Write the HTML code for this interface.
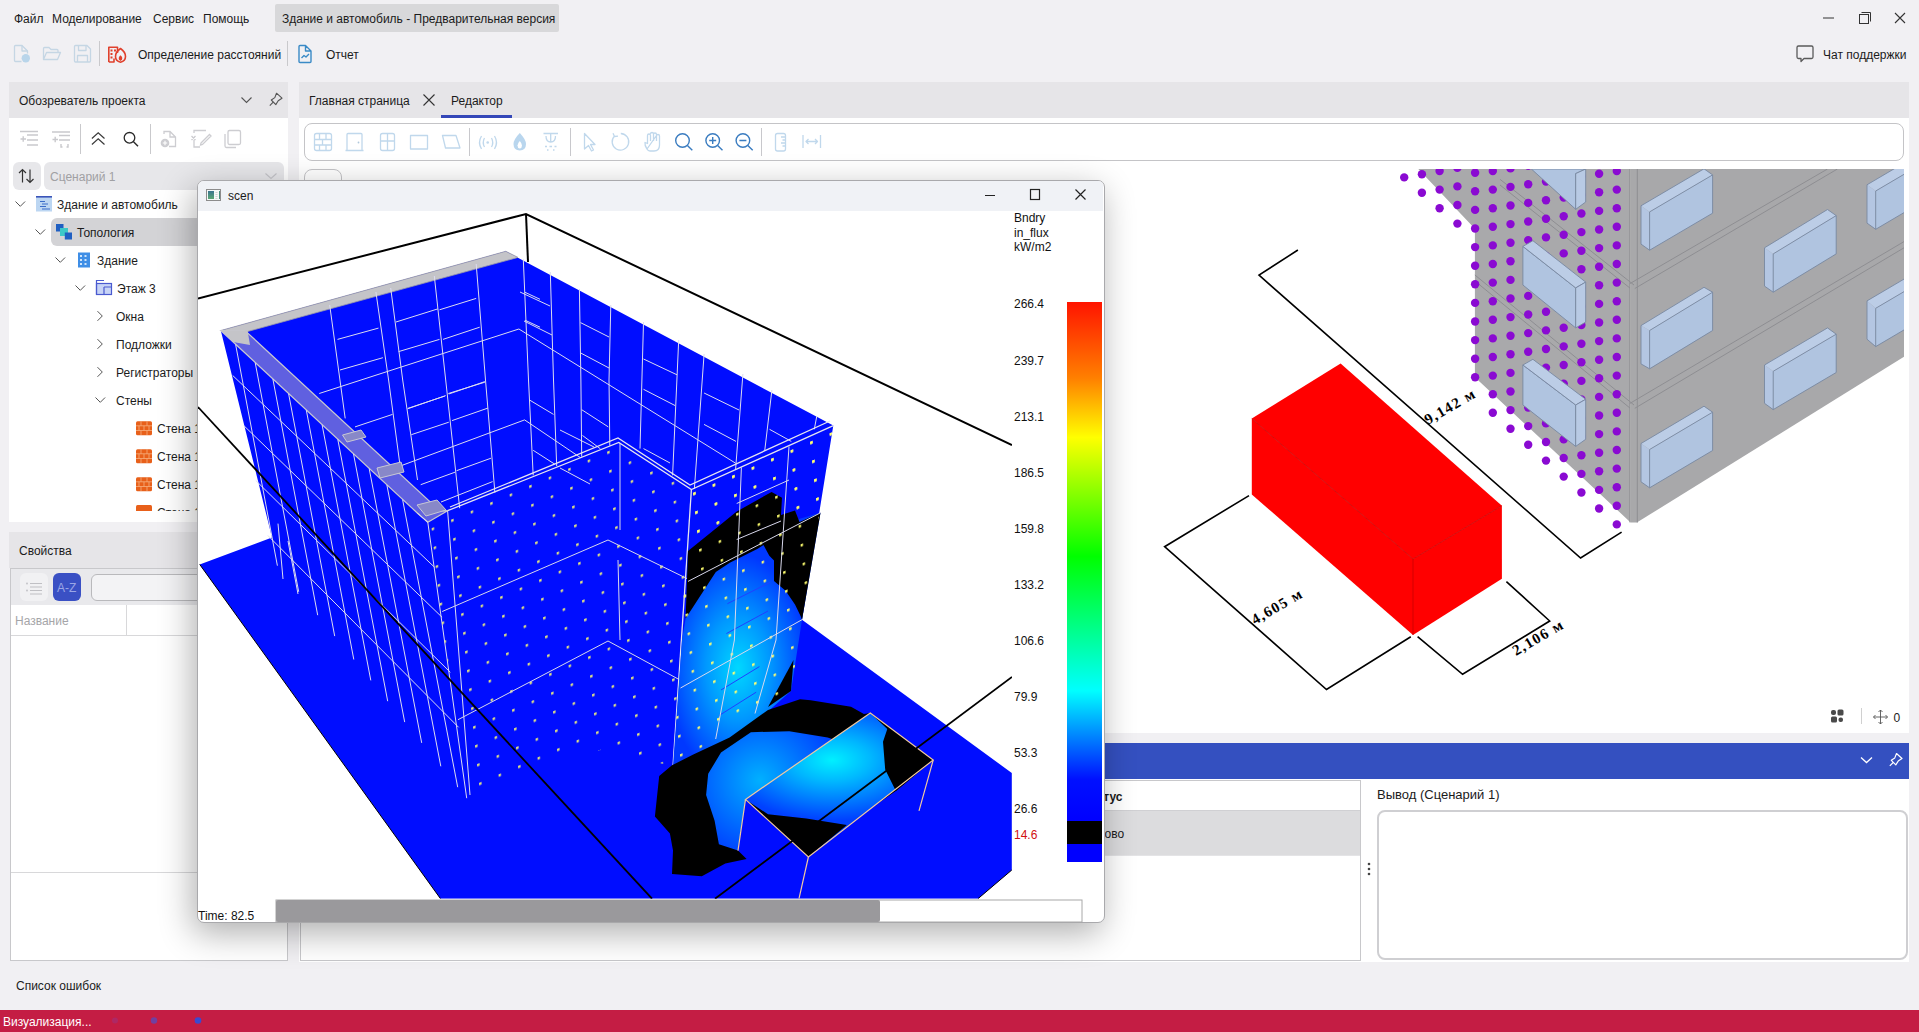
<!DOCTYPE html>
<html><head><meta charset="utf-8">
<style>
*{box-sizing:border-box;margin:0;padding:0}
html,body{width:1919px;height:1032px;overflow:hidden}
body{background:#f1f0f3;font-family:"Liberation Sans",sans-serif;font-size:12px;color:#1b1b1b;position:relative}
.a{position:absolute}
.t{position:absolute;white-space:nowrap;line-height:17px}
svg{position:absolute;overflow:visible}
</style></head><body>

<!-- MENU BAR -->
<div class="t" style="left:14px;top:11px">Файл</div>
<div class="t" style="left:52px;top:11px">Моделирование</div>
<div class="t" style="left:153px;top:11px">Сервис</div>
<div class="t" style="left:203px;top:11px">Помощь</div>
<div class="a" style="left:275px;top:4px;width:284px;height:28px;background:#d8d8da;border-radius:2px"></div>
<div class="t" style="left:282px;top:11px">Здание и автомобиль - Предварительная версия</div>
<!-- window controls -->
<svg style="left:1820px;top:10px" width="90" height="16">
 <line x1="3" y1="8" x2="14" y2="8" stroke="#333" stroke-width="1"/>
 <rect x="39.5" y="4.5" width="9" height="9" fill="none" stroke="#333" stroke-width="1"/>
 <path d="M41.5 2.5h9v9" fill="none" stroke="#333" stroke-width="1"/>
 <path d="M75 3l10 10M85 3l-10 10" stroke="#333" stroke-width="1.1"/>
</svg>

<!-- TOOLBAR -->
<div id="tb"></div>
<div class="a" style="left:99px;top:41px;width:1px;height:25px;background:#c9c9cc"></div>
<div class="t" style="left:138px;top:47px">Определение расстояний</div>
<div class="a" style="left:287px;top:41px;width:1px;height:25px;background:#c9c9cc"></div>
<div class="t" style="left:326px;top:47px">Отчет</div>
<div class="t" style="left:1823px;top:47px">Чат поддержки</div>

<!-- LEFT PANEL -->
<div class="a" style="left:9px;top:82px;width:279px;height:36px;background:#e6e5e8"></div>
<div class="t" style="left:19px;top:93px">Обозреватель проекта</div>
<div class="a" style="left:9px;top:118px;width:279px;height:404px;background:#fff"></div>
<div class="a" style="left:80px;top:124px;width:1px;height:30px;background:#c9c9cc"></div>
<div class="a" style="left:150px;top:124px;width:1px;height:30px;background:#c9c9cc"></div>
<div class="a" style="left:13px;top:162px;width:28px;height:28px;background:#e7e7ea;border-radius:6px"></div>
<div class="a" style="left:44px;top:162px;width:240px;height:28px;background:#e7e7ea;border-radius:6px"></div>
<div class="t" style="left:50px;top:169px;color:#a0a0a3">Сценарий 1</div>

<div class="a" style="left:51px;top:218px;width:237px;height:28px;background:#d3d3d6;border-radius:6px"></div>
<div id="tree"></div>
<div class="t" style="left:57px;top:197px">Здание и автомобиль</div>
<div class="t" style="left:77px;top:225px">Топология</div>
<div class="t" style="left:97px;top:253px">Здание</div>
<div class="t" style="left:117px;top:281px">Этаж 3</div>
<div class="t" style="left:116px;top:309px">Окна</div>
<div class="t" style="left:116px;top:337px">Подложки</div>
<div class="t" style="left:116px;top:365px">Регистраторы</div>
<div class="t" style="left:116px;top:393px">Стены</div>
<div class="t" style="left:157px;top:421px">Стена 1</div>
<div class="t" style="left:157px;top:449px">Стена 1</div>
<div class="t" style="left:157px;top:477px">Стена 1</div>
<div class="a" style="left:120px;top:498px;width:80px;height:13px;overflow:hidden"><div class="t" style="left:37px;top:7px">Стена 1</div><svg style="left:16px;top:7px" width="16" height="14"><rect x="0" y="0" width="16" height="14" rx="1.5" fill="#e8601a"/></svg></div>

<!-- PROPERTIES -->
<div class="a" style="left:9px;top:532px;width:279px;height:36px;background:#e6e5e8"></div>
<div class="t" style="left:19px;top:543px">Свойства</div>
<div class="a" style="left:10px;top:568px;width:278px;height:393px;background:#fff;border:1px solid #c8c8cb"></div>
<div class="a" style="left:11px;top:569px;width:276px;height:36px;background:#e9e9ec"></div>
<div class="a" style="left:20px;top:573px;width:28px;height:28px;background:#f1f1f3;border-radius:6px"></div>
<div class="a" style="left:53px;top:573px;width:28px;height:28px;background:#3a50c4;border-radius:6px"></div>
<div class="t" style="left:57px;top:580px;color:#9aa6e6">A-Z</div>
<div class="a" style="left:91px;top:574px;width:190px;height:27px;background:#f3f3f5;border:1px solid #b9b9bc;border-radius:6px"></div>
<div class="a" style="left:11px;top:635px;width:276px;height:1px;background:#d8d8da"></div>
<div class="a" style="left:126px;top:605px;width:1px;height:31px;background:#d8d8da"></div>
<div class="t" style="left:15px;top:613px;color:#a5a5a8">Название</div>
<div class="a" style="left:11px;top:872px;width:276px;height:1px;background:#d8d8da"></div>

<div class="t" style="left:16px;top:978px">Список ошибок</div>

<!-- MIDDLE PANEL -->
<div class="a" style="left:299px;top:82px;width:1610px;height:36px;background:#e6e5e8"></div>
<div class="t" style="left:309px;top:93px">Главная страница</div>
<svg style="left:422px;top:93px" width="14" height="14"><path d="M1.5 1.5l11 11M12.5 1.5l-11 11" stroke="#333" stroke-width="1.1"/></svg>
<div class="t" style="left:451px;top:93px">Редактор</div>
<div class="a" style="left:441px;top:115px;width:71px;height:3px;background:#3447b8"></div>
<div class="a" style="left:299px;top:118px;width:1610px;height:615px;background:#fff"></div>
<div class="a" style="left:304px;top:123px;width:1600px;height:38px;border:1px solid #c4c4c7;border-radius:8px;background:#fff"></div>
<div class="a" style="left:304px;top:169px;width:38px;height:38px;border:1px solid #c4c4c7;border-radius:8px;background:#fff"></div>

<!-- bottom panel -->
<div class="a" style="left:299px;top:743px;width:1610px;height:36px;background:#3450c0"></div>
<div class="a" style="left:299px;top:779px;width:1610px;height:183px;background:#fff"></div>
<div class="a" style="left:300px;top:780px;width:1061px;height:181px;border:1px solid #c8c8cb"></div>
<div class="a" style="left:301px;top:811px;width:1059px;height:45px;background:#dcdcde"></div>
<div class="a" style="left:301px;top:810px;width:1059px;height:1px;background:#d0d0d3"></div>
<div class="a" style="left:301px;top:855px;width:1059px;height:1px;background:#e4e4e6"></div>
<div class="t" style="left:1082px;top:789px;font-weight:bold">Статус</div>
<div class="t" style="left:1087px;top:826px">Готово</div>
<div class="t" style="left:1377px;top:786px;font-size:13px">Вывод (Сценарий 1)</div>
<div class="a" style="left:1377px;top:810px;width:531px;height:150px;border:2px solid #cfcfd2;border-radius:8px;background:#fff"></div>

<!-- STATUS BAR -->
<div class="a" style="left:0;top:1010px;width:1919px;height:22px;background:#c41d44"></div>
<div class="t" style="left:3px;top:1014px;color:#fff">Визуализация...</div>

<svg style="left:1100px;top:169px" width="804" height="564" viewBox="1100 169 804 564">
<defs>
 <clipPath id="vc"><rect x="1100" y="169" width="804" height="560"/></clipPath>
</defs>
<g clip-path="url(#vc)">
 <!-- grey building: left face -->
 <polygon points="1418.3,169 1474.9,228.7 1474.9,377.3 1630.6,522.4 1630.6,169" fill="#a9a9ab"/>
 <!-- front face -->
 <polygon points="1630.6,169 1904,169 1904,356.7 1636.8,522.6 1630.6,522.4" fill="#a8a8aa"/>
 <g stroke="#8e8e92" stroke-width="1" fill="none">
  <path d="M1629.9,169 L1629.9,522.4 M1637.3,169 L1637.3,522.6"/>
  <path d="M1629.9,283.6 L1827.5,169 M1634.8,288.5 L1837.4,169"/>
  <path d="M1629.9,403.4 L1904,241.6 M1634.8,408.3 L1904,247.8"/>
  <path d="M1500,179.3 L1634,285 M1500,185 L1629.9,288"/>
  <path d="M1474.9,275 L1634,405 M1474.9,281 L1629.9,408"/>
 </g>
  <!-- front face windows -->
<polygon points="1641.0,205.8 1704.0,168.8 1712.6,174.9 1649.6,211.9" fill="#bccde6"/>
<polygon points="1641.0,205.8 1649.6,211.9 1649.6,250.2 1641.0,244.1" fill="#b4c6e2"/>
<polygon points="1649.6,211.9 1712.6,174.9 1712.6,213.2 1649.6,250.2" fill="#b0c4e0"/>
<path d="M1641.0,205.8 L1704.0,168.8 L1712.6,174.9 L1712.6,213.2 L1649.6,250.2 M1641.0,205.8 L1641.0,244.1 L1649.6,250.2 L1649.6,211.9 M1649.6,211.9 L1712.6,174.9" fill="none" stroke="#7888a0" stroke-width="0.9"/>
<polygon points="1764.5,247.8 1827.5,209.5 1836.2,215.6 1773.2,253.9" fill="#bccde6"/>
<polygon points="1764.5,247.8 1773.2,253.9 1773.2,292.2 1764.5,286.1" fill="#b4c6e2"/>
<polygon points="1773.2,253.9 1836.2,215.6 1836.2,253.9 1773.2,292.2" fill="#b0c4e0"/>
<path d="M1764.5,247.8 L1827.5,209.5 L1836.2,215.6 L1836.2,253.9 L1773.2,292.2 M1764.5,247.8 L1764.5,286.1 L1773.2,292.2 L1773.2,253.9 M1773.2,253.9 L1836.2,215.6" fill="none" stroke="#7888a0" stroke-width="0.9"/>
<polygon points="1867.0,184.8 1930.0,147.7 1938.7,153.9 1875.7,191.0" fill="#bccde6"/>
<polygon points="1867.0,184.8 1875.7,191.0 1875.7,229.3 1867.0,223.1" fill="#b4c6e2"/>
<polygon points="1875.7,191.0 1938.7,153.9 1938.7,192.2 1875.7,229.3" fill="#b0c4e0"/>
<path d="M1867.0,184.8 L1930.0,147.7 L1938.7,153.9 L1938.7,192.2 L1875.7,229.3 M1867.0,184.8 L1867.0,223.1 L1875.7,229.3 L1875.7,191.0 M1875.7,191.0 L1938.7,153.9" fill="none" stroke="#7888a0" stroke-width="0.9"/>
<polygon points="1641.0,325.6 1704.0,287.3 1712.6,292.2 1649.6,330.5" fill="#bccde6"/>
<polygon points="1641.0,325.6 1649.6,330.5 1649.6,368.8 1641.0,363.9" fill="#b4c6e2"/>
<polygon points="1649.6,330.5 1712.6,292.2 1712.6,330.5 1649.6,368.8" fill="#b0c4e0"/>
<path d="M1641.0,325.6 L1704.0,287.3 L1712.6,292.2 L1712.6,330.5 L1649.6,368.8 M1641.0,325.6 L1641.0,363.9 L1649.6,368.8 L1649.6,330.5 M1649.6,330.5 L1712.6,292.2" fill="none" stroke="#7888a0" stroke-width="0.9"/>
<polygon points="1764.5,365.0 1827.5,327.9 1836.2,334.2 1773.2,371.3" fill="#bccde6"/>
<polygon points="1764.5,365.0 1773.2,371.3 1773.2,409.6 1764.5,403.3" fill="#b4c6e2"/>
<polygon points="1773.2,371.3 1836.2,334.2 1836.2,372.5 1773.2,409.6" fill="#b0c4e0"/>
<path d="M1764.5,365.0 L1827.5,327.9 L1836.2,334.2 L1836.2,372.5 L1773.2,409.6 M1764.5,365.0 L1764.5,403.3 L1773.2,409.6 L1773.2,371.3 M1773.2,371.3 L1836.2,334.2" fill="none" stroke="#7888a0" stroke-width="0.9"/>
<polygon points="1867.0,300.9 1930.0,263.8 1938.7,271.2 1875.7,308.3" fill="#bccde6"/>
<polygon points="1867.0,300.9 1875.7,308.3 1875.7,346.6 1867.0,339.2" fill="#b4c6e2"/>
<polygon points="1875.7,308.3 1938.7,271.2 1938.7,309.5 1875.7,346.6" fill="#b0c4e0"/>
<path d="M1867.0,300.9 L1930.0,263.8 L1938.7,271.2 L1938.7,309.5 L1875.7,346.6 M1867.0,300.9 L1867.0,339.2 L1875.7,346.6 L1875.7,308.3 M1875.7,308.3 L1938.7,271.2" fill="none" stroke="#7888a0" stroke-width="0.9"/>
<polygon points="1641.0,443.5 1704.0,406.2 1712.6,412.2 1649.6,449.5" fill="#bccde6"/>
<polygon points="1641.0,443.5 1649.6,449.5 1649.6,487.8 1641.0,481.8" fill="#b4c6e2"/>
<polygon points="1649.6,449.5 1712.6,412.2 1712.6,450.5 1649.6,487.8" fill="#b0c4e0"/>
<path d="M1641.0,443.5 L1704.0,406.2 L1712.6,412.2 L1712.6,450.5 L1649.6,487.8 M1641.0,443.5 L1641.0,481.8 L1649.6,487.8 L1649.6,449.5 M1649.6,449.5 L1712.6,412.2" fill="none" stroke="#7888a0" stroke-width="0.9"/>
<!-- purple dots -->
 <g fill="#8a0ad2"><circle cx="1404.2" cy="177.4" r="4.2"/><circle cx="1421.9" cy="192.8" r="4.2"/><circle cx="1421.9" cy="174.2" r="4.2"/><circle cx="1439.6" cy="208.2" r="4.2"/><circle cx="1439.6" cy="189.6" r="4.2"/><circle cx="1439.6" cy="171.0" r="4.2"/><circle cx="1457.4" cy="223.6" r="4.2"/><circle cx="1457.4" cy="205.0" r="4.2"/><circle cx="1457.4" cy="186.4" r="4.2"/><circle cx="1457.4" cy="167.8" r="4.2"/><circle cx="1475.1" cy="377.3" r="4.2"/><circle cx="1475.1" cy="358.7" r="4.2"/><circle cx="1475.1" cy="340.1" r="4.2"/><circle cx="1475.1" cy="321.5" r="4.2"/><circle cx="1475.1" cy="302.9" r="4.2"/><circle cx="1475.1" cy="284.3" r="4.2"/><circle cx="1475.1" cy="265.7" r="4.2"/><circle cx="1475.1" cy="247.1" r="4.2"/><circle cx="1475.1" cy="228.5" r="4.2"/><circle cx="1475.1" cy="209.9" r="4.2"/><circle cx="1475.1" cy="191.3" r="4.2"/><circle cx="1475.1" cy="172.7" r="4.2"/><circle cx="1492.8" cy="412.8" r="4.2"/><circle cx="1492.8" cy="394.2" r="4.2"/><circle cx="1492.8" cy="375.6" r="4.2"/><circle cx="1492.8" cy="357.0" r="4.2"/><circle cx="1492.8" cy="338.4" r="4.2"/><circle cx="1492.8" cy="319.8" r="4.2"/><circle cx="1492.8" cy="301.2" r="4.2"/><circle cx="1492.8" cy="282.6" r="4.2"/><circle cx="1492.8" cy="264.0" r="4.2"/><circle cx="1492.8" cy="245.4" r="4.2"/><circle cx="1492.8" cy="226.8" r="4.2"/><circle cx="1492.8" cy="208.2" r="4.2"/><circle cx="1492.8" cy="189.6" r="4.2"/><circle cx="1492.8" cy="171.0" r="4.2"/><circle cx="1510.5" cy="428.7" r="4.2"/><circle cx="1510.5" cy="410.1" r="4.2"/><circle cx="1510.5" cy="391.5" r="4.2"/><circle cx="1510.5" cy="372.9" r="4.2"/><circle cx="1510.5" cy="354.3" r="4.2"/><circle cx="1510.5" cy="335.7" r="4.2"/><circle cx="1510.5" cy="317.1" r="4.2"/><circle cx="1510.5" cy="298.5" r="4.2"/><circle cx="1510.5" cy="279.9" r="4.2"/><circle cx="1510.5" cy="261.3" r="4.2"/><circle cx="1510.5" cy="242.7" r="4.2"/><circle cx="1510.5" cy="224.1" r="4.2"/><circle cx="1510.5" cy="205.5" r="4.2"/><circle cx="1510.5" cy="186.9" r="4.2"/><circle cx="1510.5" cy="168.3" r="4.2"/><circle cx="1528.2" cy="444.7" r="4.2"/><circle cx="1528.2" cy="426.1" r="4.2"/><circle cx="1528.2" cy="407.5" r="4.2"/><circle cx="1528.2" cy="388.9" r="4.2"/><circle cx="1528.2" cy="370.3" r="4.2"/><circle cx="1528.2" cy="351.7" r="4.2"/><circle cx="1528.2" cy="333.1" r="4.2"/><circle cx="1528.2" cy="314.5" r="4.2"/><circle cx="1528.2" cy="295.9" r="4.2"/><circle cx="1528.2" cy="277.3" r="4.2"/><circle cx="1528.2" cy="258.7" r="4.2"/><circle cx="1528.2" cy="240.1" r="4.2"/><circle cx="1528.2" cy="221.5" r="4.2"/><circle cx="1528.2" cy="202.9" r="4.2"/><circle cx="1528.2" cy="184.3" r="4.2"/><circle cx="1528.2" cy="165.7" r="4.2"/><circle cx="1546.0" cy="460.6" r="4.2"/><circle cx="1546.0" cy="442.0" r="4.2"/><circle cx="1546.0" cy="423.4" r="4.2"/><circle cx="1546.0" cy="404.8" r="4.2"/><circle cx="1546.0" cy="386.2" r="4.2"/><circle cx="1546.0" cy="367.6" r="4.2"/><circle cx="1546.0" cy="349.0" r="4.2"/><circle cx="1546.0" cy="330.4" r="4.2"/><circle cx="1546.0" cy="311.8" r="4.2"/><circle cx="1546.0" cy="293.2" r="4.2"/><circle cx="1546.0" cy="274.6" r="4.2"/><circle cx="1546.0" cy="256.0" r="4.2"/><circle cx="1546.0" cy="237.4" r="4.2"/><circle cx="1546.0" cy="218.8" r="4.2"/><circle cx="1546.0" cy="200.2" r="4.2"/><circle cx="1546.0" cy="181.6" r="4.2"/><circle cx="1563.7" cy="476.6" r="4.2"/><circle cx="1563.7" cy="458.0" r="4.2"/><circle cx="1563.7" cy="439.4" r="4.2"/><circle cx="1563.7" cy="420.8" r="4.2"/><circle cx="1563.7" cy="402.2" r="4.2"/><circle cx="1563.7" cy="383.6" r="4.2"/><circle cx="1563.7" cy="365.0" r="4.2"/><circle cx="1563.7" cy="346.4" r="4.2"/><circle cx="1563.7" cy="327.8" r="4.2"/><circle cx="1563.7" cy="309.2" r="4.2"/><circle cx="1563.7" cy="290.6" r="4.2"/><circle cx="1563.7" cy="272.0" r="4.2"/><circle cx="1563.7" cy="253.4" r="4.2"/><circle cx="1563.7" cy="234.8" r="4.2"/><circle cx="1563.7" cy="216.2" r="4.2"/><circle cx="1563.7" cy="197.6" r="4.2"/><circle cx="1563.7" cy="179.0" r="4.2"/><circle cx="1581.4" cy="492.5" r="4.2"/><circle cx="1581.4" cy="473.9" r="4.2"/><circle cx="1581.4" cy="455.3" r="4.2"/><circle cx="1581.4" cy="436.7" r="4.2"/><circle cx="1581.4" cy="418.1" r="4.2"/><circle cx="1581.4" cy="399.5" r="4.2"/><circle cx="1581.4" cy="380.9" r="4.2"/><circle cx="1581.4" cy="362.3" r="4.2"/><circle cx="1581.4" cy="343.7" r="4.2"/><circle cx="1581.4" cy="325.1" r="4.2"/><circle cx="1581.4" cy="306.5" r="4.2"/><circle cx="1581.4" cy="287.9" r="4.2"/><circle cx="1581.4" cy="269.3" r="4.2"/><circle cx="1581.4" cy="250.7" r="4.2"/><circle cx="1581.4" cy="232.1" r="4.2"/><circle cx="1581.4" cy="213.5" r="4.2"/><circle cx="1581.4" cy="194.9" r="4.2"/><circle cx="1581.4" cy="176.3" r="4.2"/><circle cx="1599.1" cy="508.5" r="4.2"/><circle cx="1599.1" cy="489.9" r="4.2"/><circle cx="1599.1" cy="471.3" r="4.2"/><circle cx="1599.1" cy="452.7" r="4.2"/><circle cx="1599.1" cy="434.1" r="4.2"/><circle cx="1599.1" cy="415.5" r="4.2"/><circle cx="1599.1" cy="396.9" r="4.2"/><circle cx="1599.1" cy="378.3" r="4.2"/><circle cx="1599.1" cy="359.7" r="4.2"/><circle cx="1599.1" cy="341.1" r="4.2"/><circle cx="1599.1" cy="322.5" r="4.2"/><circle cx="1599.1" cy="303.9" r="4.2"/><circle cx="1599.1" cy="285.3" r="4.2"/><circle cx="1599.1" cy="266.7" r="4.2"/><circle cx="1599.1" cy="248.1" r="4.2"/><circle cx="1599.1" cy="229.5" r="4.2"/><circle cx="1599.1" cy="210.9" r="4.2"/><circle cx="1599.1" cy="192.3" r="4.2"/><circle cx="1599.1" cy="173.7" r="4.2"/><circle cx="1616.8" cy="524.4" r="4.2"/><circle cx="1616.8" cy="505.8" r="4.2"/><circle cx="1616.8" cy="487.2" r="4.2"/><circle cx="1616.8" cy="468.6" r="4.2"/><circle cx="1616.8" cy="450.0" r="4.2"/><circle cx="1616.8" cy="431.4" r="4.2"/><circle cx="1616.8" cy="412.8" r="4.2"/><circle cx="1616.8" cy="394.2" r="4.2"/><circle cx="1616.8" cy="375.6" r="4.2"/><circle cx="1616.8" cy="357.0" r="4.2"/><circle cx="1616.8" cy="338.4" r="4.2"/><circle cx="1616.8" cy="319.8" r="4.2"/><circle cx="1616.8" cy="301.2" r="4.2"/><circle cx="1616.8" cy="282.6" r="4.2"/><circle cx="1616.8" cy="264.0" r="4.2"/><circle cx="1616.8" cy="245.4" r="4.2"/><circle cx="1616.8" cy="226.8" r="4.2"/><circle cx="1616.8" cy="208.2" r="4.2"/><circle cx="1616.8" cy="189.6" r="4.2"/><circle cx="1616.8" cy="171.0" r="4.2"/></g>
 <!-- left face windows -->
 <g stroke="#7888a0" stroke-width="0.9">
  <polygon points="1522.9,246.4 1575.7,287.9 1575.7,327.9 1522.9,285" fill="#b0c4e0"/>
  <polygon points="1522.9,246.4 1532.9,240.7 1585.7,282.1 1575.7,287.9" fill="#bccde6"/>
  <polygon points="1575.7,287.9 1585.7,282.1 1585.7,322.1 1575.7,327.9" fill="#b8cae4"/>
  <polygon points="1522.9,365 1575.7,405 1575.7,446.4 1522.9,405" fill="#b0c4e0"/>
  <polygon points="1522.9,365 1532.9,359.3 1585.7,399.3 1575.7,405" fill="#bccde6"/>
  <polygon points="1575.7,405 1585.7,399.3 1585.7,439.3 1575.7,446.4" fill="#b8cae4"/>
  <polygon points="1531.4,169 1585.7,169 1575.7,173.6 1575.7,209.3" fill="#b0c4e0"/>
  <polygon points="1575.7,173.6 1585.7,169 1585.7,202 1575.7,209.3" fill="#b8cae4"/>
 </g>
 <!-- red box -->
 <polygon points="1251.8,418.6 1340.6,363.5 1501.9,505.7 1413,559" fill="#ff0000"/>
 <polygon points="1251.8,418.6 1413,559 1413,635 1251.8,494.5" fill="#ff0000"/>
 <polygon points="1413,559 1501.9,505.7 1501.9,578.8 1413,635" fill="#ff0000"/>
 <path d="M1251.8,418.6 L1413,559 L1501.9,505.7 M1413,559 L1413,635" stroke="#c80000" stroke-width="0.8" fill="none"/>
 <!-- dimension lines -->
 <g stroke="#000" stroke-width="1.6" fill="none">
  <path d="M1297.9,250 L1259,275.2 L1580.6,558 L1621.6,532.1"/>
  <path d="M1249,495.6 L1164.6,546.7 L1326.5,689.5 L1410.8,636.7"/>
  <path d="M1417.6,636.7 L1462.6,674.3 L1549.7,621 L1506.4,581.6"/>
 </g>
 <g font-family="Liberation Serif" font-weight="bold" font-size="15" fill="#000">
  <text letter-spacing="1.3" transform="translate(1428,425) rotate(-30)">9,142 м</text>
  <text letter-spacing="1.3" transform="translate(1255,625) rotate(-30)">4,605 м</text>
  <text letter-spacing="1.3" transform="translate(1516,656) rotate(-30)">2,106 м</text>
 </g>
</g>
<!-- bottom right status -->
<g fill="#4a4a4a">
 <rect x="1831" y="710" width="5" height="5" rx="2"/>
 <rect x="1837.5" y="709.5" width="6" height="6" rx="1.5"/>
 <rect x="1831" y="716.5" width="6" height="6" rx="1.5"/>
 <rect x="1838.5" y="717.5" width="4.5" height="4.5" rx="2"/>
</g>
<path d="M1861.5,708 L1861.5,724" stroke="#d0d0d0" stroke-width="1"/>
<g stroke="#555" stroke-width="0.9" fill="none">
 <path d="M1880.5,710 L1880.5,724 M1873.5,717 L1887.5,717 M1878.5,712 L1880.5,710 L1882.5,712 M1878.5,722 L1880.5,724 L1882.5,722 M1875.5,715 L1873.5,717 L1875.5,719 M1885.5,715 L1887.5,717 L1885.5,719"/>
</g>
<text x="1893.5" y="722" font-family="Liberation Sans" font-size="12" fill="#222">0</text>
</svg>

<!-- SCEN WINDOW -->
<div class="a" style="left:197px;top:180px;width:908px;height:743px;background:#fff;border:1px solid #a9a9ac;border-radius:7px;box-shadow:-4px 10px 34px rgba(0,0,0,0.32);overflow:hidden">
 <div class="a" style="left:0;top:0;width:905px;height:30px;background:#f0f2f6"></div>
</div>
<svg style="left:198px;top:181px" width="905" height="741" viewBox="198 181 905 741">
<defs>
 <clipPath id="sc"><rect x="198" y="210" width="814" height="688.7"/></clipPath>
 <linearGradient id="cbar" x1="0" y1="0" x2="0" y2="1">
  <stop offset="0" stop-color="#ff1400"/>
  <stop offset="0.147" stop-color="#ff8000"/>
  <stop offset="0.261" stop-color="#ffff00"/>
  <stop offset="0.49" stop-color="#00ff00"/>
  <stop offset="0.749" stop-color="#00ffff"/>
  <stop offset="0.92" stop-color="#0010ff"/>
  <stop offset="1" stop-color="#0000ff"/>
 </linearGradient>
 <radialGradient id="wallg" cx="738" cy="668" r="95" gradientUnits="userSpaceOnUse" gradientTransform="translate(738 668) scale(0.75 1.2) rotate(-20) translate(-738 -668)">
  <stop offset="0" stop-color="#00d8ff"/>
  <stop offset="0.45" stop-color="#0098ff"/>
  <stop offset="1" stop-color="#0038ff"/>
 </radialGradient>
 <radialGradient id="roofg" cx="832" cy="760" r="110" gradientUnits="userSpaceOnUse" gradientTransform="translate(832 760) scale(1 0.55) rotate(-35) translate(-832 -760)">
  <stop offset="0" stop-color="#00f0ff"/>
  <stop offset="0.35" stop-color="#00b8ff"/>
  <stop offset="1" stop-color="#0040ff"/>
 </radialGradient>
 <radialGradient id="gndg" cx="760" cy="780" r="80" gradientUnits="userSpaceOnUse">
  <stop offset="0" stop-color="#00b0ff"/>
  <stop offset="1" stop-color="#0040ff"/>
 </radialGradient>
 <pattern id="ydots" width="19.5" height="18.8" patternUnits="userSpaceOnUse" patternTransform="matrix(1,-0.436,0.106,1,0,0)">
  <rect x="8" y="8" width="2.4" height="2.4" fill="#ffff70"/>
 </pattern>
</defs>
<!-- title bar -->
<linearGradient id="icg" x1="0" y1="0" x2="0" y2="1"><stop offset="0" stop-color="#3a7490"/><stop offset="1" stop-color="#5aa874"/></linearGradient>
<rect x="206.5" y="189.5" width="14" height="11" fill="#f4f8f8" stroke="#8c8c8c" stroke-width="1"/>
<rect x="208" y="191" width="6" height="8" fill="url(#icg)"/>
<rect x="219" y="191" width="1" height="8" fill="#4a9080"/>
<path d="M215.5,192.5h2M215.5,194.5h2M215.5,196.5h2M215.5,198.5h2" stroke="#c8c8c8" stroke-width="0.8"/>
<text x="228" y="200" font-family="Liberation Sans" font-size="12" fill="#1b1b1b">scen</text>
<path d="M985 195.5h10" stroke="#222" stroke-width="1"/>
<rect x="1030.5" y="189.5" width="9" height="10" fill="none" stroke="#222" stroke-width="1.2"/>
<path d="M1075.5 189.5l10 10M1085.5 189.5l-10 10" stroke="#222" stroke-width="1.2"/>

<g clip-path="url(#sc)">
 <!-- box lines behind -->
 <path d="M198 298.5L526 214L1012 445" fill="none" stroke="#000" stroke-width="2"/>
 <path d="M526 214L528 262" fill="none" stroke="#000" stroke-width="2"/>
 <!-- blue union -->
 <polygon points="199.7,564.4 272,537.5 220.8,330.5 505.8,251.3 833.3,425.6 811.6,560 802,619.7 1011.8,773 1011.8,870 978,898.7 440.5,898.7" fill="#000dff"/>
 <!-- wall top strip back -->
 <polygon points="220.8,330.5 505.8,251.3 518,257.4 247.6,331.5" fill="#c4c4c8" stroke="#9a9aa8" stroke-width="0.8"/>
 <!-- left wall strip -->
 <polygon points="220.8,330.5 245,330.5 440,511 447.6,510.7 427.8,522.3 417.3,513" fill="#6060e0" stroke="#c8c8d0" stroke-width="1.2"/>
 <polygon points="220.8,330.5 247.6,330.5 250,345 233,342" fill="#c4c4c8"/>
 <!-- inner back wall lines -->
 <g stroke="#dcdcf0" stroke-width="1" fill="none">
  <path d="M329.7,305.0 L345.2,418.4"/>
  <path d="M375.9,292.0 L388.6,380.0 L400.3,467.5"/>
  <path d="M390.7,288.0 L402.7,380.0 L417.5,480.0"/>
  <path d="M434.3,276.0 L445.7,380.0 L459.7,508.2"/>
  <path d="M476.2,264.0 L485.5,380.0 L494.9,492.6"/>
  <path d="M523.3,259.2 L528.5,380.0 L533.2,475.4"/>
  <path d="M550.3,272.0 L553.5,380.0 L556.7,466.0"/>
  <path d="M579.4,289.0 L580.9,380.0 L581.7,456.6"/>
  <path d="M610.8,305.0 L609.0,380.0 L609.8,445.6"/>
  <path d="M643.5,322.0 L640.0,448.6"/>
  <path d="M678.7,340.0 L672.6,475.3"/>
  <path d="M704.1,354.0 L694.4,488.6"/>
  <path d="M742.9,374.0 L735.6,469.2"/>
  <path d="M771.9,390.0 L764.7,451.0"/>
  <path d="M816.8,416.0 L814.3,429.3"/>
  <path d="M319.2,393.5 L518.9,329.0 L735.6,463.2"/>
  <path d="M400.3,466.0 L524.6,419.9 L580.1,457.4"/>
  <path d="M337.5,339.4 L378.5,328.1"/>
  <path d="M340.0,370.0 L382.9,357.7"/>
  <path d="M396.0,322.0 L437.8,308.9"/>
  <path d="M398.6,351.6 L439.5,339.4"/>
  <path d="M439.5,309.8 L476.2,298.4"/>
  <path d="M443.0,339.4 L479.7,327.2"/>
  <path d="M408.0,408.3 L444.8,396.1"/>
  <path d="M448.3,393.5 L484.9,382.2"/>
  <path d="M525.0,292.3 L540.0,299.3"/>
  <path d="M525.0,320.2 L540.0,327.2"/>
  <path d="M355.0,426.9 L392.5,414.4"/>
  <path d="M407.4,408.9 L445.7,395.6"/>
  <path d="M411.3,434.7 L448.8,422.2"/>
  <path d="M420.7,484.7 L455.0,472.2"/>
  <path d="M441.0,502.0 L492.6,481.6"/>
  <path d="M448.8,394.0 L484.8,381.6"/>
  <path d="M452.0,420.6 L487.9,408.1"/>
  <path d="M456.6,470.7 L491.0,458.2"/>
  <path d="M530.0,400.3 L553.5,414.4"/>
  <path d="M533.2,450.3 L555.1,464.4"/>
  <path d="M581.7,409.7 L608.3,426.9"/>
  <path d="M582.5,435.5 L600.4,448.8"/>
  <path d="M520.0,292.0 L550.0,306.0"/>
  <path d="M524.0,321.0 L552.0,335.0"/>
  <path d="M580.5,322.6 L609.0,337.0"/>
  <path d="M580.5,352.9 L609.0,368.0"/>
  <path d="M643.5,359.0 L677.0,374.8"/>
  <path d="M643.5,389.3 L675.0,405.5"/>
  <path d="M704.1,393.0 L739.0,410.0"/>
  <path d="M704.0,424.4 L736.0,441.4"/>
  <path d="M769.5,429.3 L791.3,441.4"/>
  <path d="M643.5,448.6 L670.0,463.0"/>
  <path d="M560.0,430.0 L594.0,447.0"/>
  <path d="M560.0,468.0 L590.0,484.0"/>
 </g>
 <!-- strip cross bars -->
 <g fill="#8888c8" stroke="#c8c8d4" stroke-width="1">
  <polygon points="342.5,435 361,430 366,437 347,442"/>
  <polygon points="377,468 401,462 404,472 380,478"/>
  <polygon points="417,505 437,500 446,510 426,516"/>
 </g>
 <!-- left outer wall lines -->
 <g stroke="#dcdcf0" stroke-width="1" fill="none">
  <path d="M235.6,344.4 L277.4,565.7"/>
  <path d="M255.2,362.7 L298.7,591.8"/>
  <path d="M272.9,379.1 L317.7,615.2"/>
  <path d="M288.6,393.7 L334.7,636.1"/>
  <path d="M306.3,410.1 L353.8,659.5"/>
  <path d="M322.1,424.8 L370.8,680.4"/>
  <path d="M337.8,439.4 L387.7,701.2"/>
  <path d="M353.5,453.9 L404.7,722.1"/>
  <path d="M369.2,468.6 L421.7,742.9"/>
  <path d="M386.9,485.0 L440.8,766.3"/>
  <path d="M402.6,499.6 L457.7,787.2"/>
  <path d="M232.7,375.5 L434.6,567.3"/>
  <path d="M243.7,425.5 L442.1,617.3"/>
  <path d="M255.8,480.5 L450.3,672.3"/>
  <path d="M267.9,535.5 L458.6,727.3"/>
  <path d="M278.0,523.6 L283.0,579.0"/>
  <path d="M288.0,541.0 L298.0,594.0"/>
  <path d="M417.3,513.0 L427.8,522.3 L466.7,798.2"/>
  <path d="M447.6,510.7 L470.0,795.0"/>
 </g>
 <!-- front walls dotted -->
 <polygon points="427.8,522.3 447.6,510.7 618.8,442.4 691.4,489.5 673,766 600,750 466.7,798.2" fill="url(#ydots)" opacity="0.9"/>
 <polygon points="691.4,489.5 833.3,425.6 802,619.7 791,691 673,766" fill="url(#ydots)"/>
 <g stroke="#e6e6f0" stroke-width="1.3" fill="none">
  <path d="M447.6,510.7 L618.8,442.4 L691.4,489.5 L833.3,425.6"/>
  <path d="M450,507 L618,438 L690,485 L830,421"/>
  <path d="M691.4,489.5 L673,766"/>
 </g>
 <g stroke="#d8d8ec" stroke-width="1" fill="none">
  <path d="M442.2,611.5 L608,540 L690,580"/>
  <path d="M458,719.7 L608,641 L680,680"/>
  <path d="M620,443 L620,530 M618,560 L620,640"/>

 </g>
 <!-- right wall gradient + black -->
 <polygon points="688,551 685.6,618.6 682,640 673,766 680,790 791,691 802,619.7 820.5,512.8" fill="url(#wallg)"/>
 <polygon points="688,551 718,526.7 736.7,511.6 771.6,491.9 782,497.7 781,515 795,510.5 799.5,522 820.5,512.8 802,619.7 800.7,616.3 795,604.6 785.6,590.7 774,581 774,560.5 769.3,555.8 763.5,545 757.7,548.8 729.8,562.8 715.8,572 685.6,618.6" fill="#000"/>
 <polygon points="793.5,660 768,707 791,691" fill="#000"/>
 <polygon points="691.4,489.5 833.3,425.6 802,619.7 791,691 673,766" fill="url(#ydots)"/>
 <g stroke="#2040ff" stroke-width="1" fill="none">
  <path d="M727.4,603.7 L770,582.4 M726.4,633.6 L768,611 M721,690 L759.4,666.6 M719,715.6 L756.2,692.2"/>
 </g>
 <g stroke="#d8d8ec" stroke-width="1" fill="none">
  <path d="M741.4,467.4 L734.4,640 L715.7,739 M789,446.5 L776,640 L755,713.5"/>
  <path d="M688,581.4 L820.5,512.8 M680.5,688 L802,619.7 M736.7,503.5 L789,480 M736.7,539.5 L781,521"/>
 </g>
 <!-- ground black shadow -->
 <polygon points="654.9,816.5 659.2,776 672,765.3 693.3,754.6 729.6,737.6 768,709.9 800,699.2 810.6,700.3 851,706.7 863.9,714.1 870.3,713 933.2,760 895.9,790.9 846.8,825 806.3,818.6 768,814.3 745.5,799.4 738,850.6 746.6,859 725.3,863.4 701.8,876.2 672,874 673,850.6 669.9,833.5" fill="#000"/>
 <polygon points="738,850.6 718.9,844.2 714.6,820.7 706.1,795.1 708.2,773.8 721,752.5 750.9,732.2 789.3,731.2 827.6,737.6 850,745 745.5,799.4" fill="url(#gndg)"/>
 <!-- roof -->
 <polygon points="745.5,799.4 870.3,713 933.2,760 808.4,857" fill="url(#roofg)"/>
 <polygon points="887.3,729 883,741.8 885.2,769.6 895.9,790.9 933.2,760 870.3,713" fill="#000"/>
 <polygon points="768,814.3 806.3,818.6 846.8,825 808.4,857 745.5,799.4" fill="#000"/>
 <g stroke="#f0c8a0" stroke-width="1.2" fill="none">
  <path d="M745.5,799.4 L870.3,713 L933.2,760 L808.4,857 Z"/>
  <path d="M745.5,799.4 L738,850.6 M808.4,857 L799,898.7 M933.2,760 L919,810.8"/>
 </g>
 <!-- front black lines -->
 <path d="M198 407L652 898.7" fill="none" stroke="#000" stroke-width="1.8"/>
 <path d="M1012 677L715 898.7" fill="none" stroke="#000" stroke-width="1.8"/>
 <!-- ground outline edges -->
 <path d="M199.7,564.4 L440.5,898.7 M1011.8,870 L978,898.7" stroke="#000" stroke-width="1" fill="none"/>
</g>

<!-- legend -->
<g font-family="Liberation Sans" font-size="12" fill="#111">
 <text x="1014" y="222">Bndry</text>
 <text x="1014" y="237">in_flux</text>
 <text x="1014" y="251">kW/m2</text>
 <text x="1014" y="308">266.4</text>
 <text x="1014" y="364.5">239.7</text>
 <text x="1014" y="420.5">213.1</text>
 <text x="1014" y="476.5">186.5</text>
 <text x="1014" y="532.5">159.8</text>
 <text x="1014" y="589">133.2</text>
 <text x="1014" y="645">106.6</text>
 <text x="1014" y="701">79.9</text>
 <text x="1014" y="757">53.3</text>
 <text x="1014" y="813">26.6</text>
 <text x="1014" y="839" fill="#d01010">14.6</text>
</g>
<rect x="1067" y="302" width="35" height="519" fill="url(#cbar)"/>
<rect x="1067" y="821" width="35" height="23" fill="#000"/>
<rect x="1067" y="844" width="35" height="18" fill="#0000ff"/>

<!-- bottom -->
<text x="198" y="920" font-family="Liberation Sans" font-size="12" fill="#111">Time: 82.5</text>
<rect x="276" y="900" width="806" height="22" fill="#fff" stroke="#a8a8a8" stroke-width="1"/>
<rect x="276" y="900" width="604" height="22" rx="2" fill="#9a999c"/>
</svg>

<svg style="left:0;top:0" width="1919" height="1032" viewBox="0 0 1919 1032">
<!-- main toolbar -->
<g fill="none" stroke="#c5d6e4" stroke-width="1.3" stroke-linejoin="round">
 <path d="M21.5,61.5 H15.5 Q14.5,61.5 14.5,60.5 V46.5 Q14.5,45.5 15.5,45.5 H22 L27.5,51 V53.5"/>
 <path d="M22,45.5 V51 H27.5"/>
 <path d="M43.5,59.5 V48.5 Q43.5,47.5 44.5,47.5 H49 L51,49.5 H57 Q58,49.5 58,50.5 V52.5 M43.5,59.5 L46.5,52.5 H60.5 L57.5,59.5 Z"/>
 <path d="M74.5,46.5 Q74.5,45.5 75.5,45.5 H87 L90.5,49 V61 Q90.5,62 89.5,62 H75.5 Q74.5,62 74.5,61 Z M78.5,45.5 V50.5 H86 V45.5 M77.5,62 V55.5 H87.5 V62"/>
</g>
<circle cx="25.8" cy="58.2" r="4.2" fill="#b9d5ea"/>
<g fill="none" stroke="#e0402c" stroke-width="1.6" stroke-linejoin="round">
 <path d="M108.8,62 V47.2 H117.5 V53 M108.8,62 H114 V58.5"/>
 <path d="M120.5,62.2 Q115.5,61 115.5,56.5 Q115.5,52 120.5,48.5 Q125.5,52 125.5,56.5 Q125.5,61 120.5,62.2 Z"/>
</g>
<g fill="#e0402c"><rect x="110.5" y="49.5" width="2" height="2"/><rect x="114" y="49.5" width="2" height="2"/><rect x="110.5" y="53" width="2" height="2"/><rect x="110.5" y="56.5" width="2" height="2"/></g>
<path d="M120.5,61 Q118.5,60 118.7,58 Q119,56.5 120.5,55.2 Q122,56.5 122.3,58 Q122.5,60 120.5,61Z" fill="#e0402c"/>
<g fill="none" stroke="#3a8ac6" stroke-width="1.4" stroke-linejoin="round">
 <path d="M299,46.5 Q299,45.5 300,45.5 H305.5 L311,51 V61.5 Q311,62.5 310,62.5 H300 Q299,62.5 299,61.5 Z M305.5,45.5 V51 H311"/>
 <path d="M301.5,58 L304,55.5 L306,57 L309,54"/>
</g>
<g fill="none" stroke="#5a5a5a" stroke-width="1.3" stroke-linejoin="round">
 <path d="M1798.5,46 H1811.5 Q1813,46 1813,47.5 V57 Q1813,58.5 1811.5,58.5 H1804 L1801,61.5 V58.5 H1798.5 Q1797,58.5 1797,57 V47.5 Q1797,46 1798.5,46 Z"/>
</g>
<!-- panel header icons -->
<path d="M241.5,97.5 L246.5,102.5 L251.5,97.5" fill="none" stroke="#555" stroke-width="1.1"/>
<g fill="none" stroke="#555" stroke-width="1.1" stroke-linejoin="round">
 <path d="M276.5,93.2 L282,98.2 L278.2,100.8 L275.8,104.6 L271.3,100 L274.8,97.6 Z"/>
 <path d="M273.2,102.2 L269.8,105.6"/>
</g>
<!-- left toolbar -->
<g fill="none" stroke="#c9c9cd" stroke-width="1.4">
 <path d="M20,131.5 H38 M27,135 H38 M27,140 H38 M27,145 H38 M20.5,139 H26 M23.2,136.3 V141.7"/>
 <path d="M52,132 H70 M59,135.5 H70 M59,140 H70 M52.5,139.5 H58 M55.2,136.8 V142.2 M61,144 V147 H62.5 M68,144 V147 H66.5"/>
</g>
<path d="M91.9,138.5 L98.2,132.8 L104.5,138.5 M91.9,144.5 L98.2,138.8 L104.5,144.5" fill="none" stroke="#3a3a3a" stroke-width="1.2"/>
<circle cx="129.5" cy="137.8" r="5.3" fill="none" stroke="#2a2a2a" stroke-width="1.3"/>
<path d="M133.3,141.6 L138,146.3" stroke="#2a2a2a" stroke-width="1.4"/>
<g fill="none" stroke="#cdcdd1" stroke-width="1.3">
 <path d="M164,134 V131.5 H170 L175.5,137 V146.5 H169 M170,131.5 V137 H175.5"/>
 <path d="M194,133 V130.5 H206 M200,147 H194 V140 M191.5,136 L195.5,140 M195.5,136 L191.5,140 M201,143 L209.5,134.5 L211,136 L202.5,144.5 L200.5,145 Z"/>
 <path d="M229.5,130.5 H239 Q240.5,130.5 240.5,132 V143 Q240.5,144.5 239,144.5 H229.5 Q228,144.5 228,143 V132 Q228,130.5 229.5,130.5 Z M225,134 V146 Q225,147.5 226.5,147.5 H236"/>
</g>
<circle cx="165" cy="143" r="4.3" fill="#cdcdd1"/>
<path d="M165,140.8 V145.2 M162.8,143 H167.2" stroke="#fff" stroke-width="1.1"/>
<!-- sort -->
<path d="M22.5,182.5 V169.5 M19,173 L22.5,169.5 L26,173 M30,169.5 V182.5 M26.5,179 L30,182.5 L33.5,179" fill="none" stroke="#333" stroke-width="1.2"/>
<path d="M265.5,173.5 L271,178.5 L276.5,173.5" fill="none" stroke="#b8b8bc" stroke-width="1.1"/>
<!-- tree chevrons -->
<g fill="none" stroke="#555" stroke-width="1">
 <path d="M15.5,201.5 L20.3,206.3 L25.1,201.5"/>
 <path d="M35.5,229.5 L40.3,234.3 L45.1,229.5"/>
 <path d="M55.5,257.5 L60.3,262.3 L65.1,257.5"/>
 <path d="M75.5,285.5 L80.3,290.3 L85.1,285.5"/>
 <path d="M97.5,311.2 L102.3,316 L97.5,320.8"/>
 <path d="M97.5,339.2 L102.3,344 L97.5,348.8"/>
 <path d="M97.5,367.2 L102.3,372 L97.5,376.8"/>
 <path d="M95.5,397.5 L100.3,402.3 L105.1,397.5"/>
</g>
<!-- tree icons -->
<rect x="36" y="196" width="16" height="15.5" fill="#bcd6f2"/>
<rect x="36" y="196" width="16" height="1.6" fill="#3a54b8"/>
<path d="M40,201.5 H45 M42,204 H48 M40,206.5 H46 M42,209 H50" stroke="#3a6cc8" stroke-width="1"/>
<rect x="56" y="224" width="7.5" height="7.5" fill="#1f5fc2"/>
<rect x="60" y="228" width="8" height="8" fill="#3cc8c8"/>
<rect x="64.8" y="232.5" width="7.2" height="7" fill="#1f5fc2"/>
<rect x="78" y="252.5" width="12" height="15" fill="#3f8ee6"/>
<g fill="#cfe4fa"><rect x="80" y="255" width="2" height="2"/><rect x="84.5" y="255" width="2" height="2"/><rect x="80" y="259" width="2" height="2"/><rect x="84.5" y="259" width="2" height="2"/><rect x="80" y="263" width="2" height="2"/><rect x="84.5" y="263" width="2" height="2"/></g>
<rect x="96.5" y="283.5" width="15" height="11" fill="#c8d4f6" stroke="#4a5ad0" stroke-width="1.2"/>
<path d="M96.5,280 V294.5 M96.5,280.5 H104 M104,287 V294.5 M104,287 H111.5" fill="none" stroke="#4a5ad0" stroke-width="1.2"/>
<g id="brick">
 <rect x="136" y="421.2" width="16" height="14" rx="1.5" fill="#e8601a"/>
 <path d="M136,425.8 H152 M136,430.5 H152 M141,421.2 V425.8 M147,421.2 V425.8 M139,425.8 V430.5 M144,425.8 V430.5 M149,425.8 V430.5 M141,430.5 V435 M147,430.5 V435" stroke="#f6b080" stroke-width="0.8"/>
</g>
<use href="#brick" y="28"/>
<use href="#brick" y="56"/>
<!-- properties list icon -->
<g stroke="#c0c0c4" stroke-width="1.1"><path d="M30,583.5 H42 M30,587 H42 M30,590.5 H42 M30,594 H42"/></g>
<g fill="#c0c0c4"><circle cx="27" cy="583.5" r="0.9"/><circle cx="27" cy="590.5" r="0.9"/></g>
<!-- editor toolbar -->
<g fill="none" stroke="#c0d8ec" stroke-width="1.3" stroke-linejoin="round">
 <rect x="314.5" y="133.5" width="17" height="17" rx="2"/>
 <path d="M314.5,139.5 H331.5 M314.5,145 H331.5 M319.5,133.5 V139.5 M326,133.5 V139.5 M322.5,139.5 V145 M319.5,145 V150.5 M326,145 V150.5"/>
 <path d="M347,150.5 V134.5 Q347,133.5 348,133.5 H361 Q362,133.5 362,134.5 V150.5 M345.5,150.5 H363.5"/>
 <rect x="380.5" y="133.5" width="14" height="17" rx="2"/>
 <path d="M387.5,133.5 V150.5 M380.5,141 H394.5"/>
 <rect x="410.5" y="135.5" width="17" height="13.5"/>
 <path d="M442.5,135.5 H456 L460,148 H445.5 Z"/>
 <path d="M481.5,136 Q477.5,142.5 481.5,149 M484.5,138 Q482,142.5 484.5,147 M494.5,136 Q498.5,142.5 494.5,149 M491.5,138 Q494,142.5 491.5,147"/>
 <path d="M543.5,133.5 H558 M546,136 Q546,142 550.7,142 Q555.5,142 555.5,136 M550.7,133.5 V142 M545,146.5 H547 M549.5,146.5 H552 M554.5,146.5 H556.5 M547,150 H548.5 M553,150 H554.5"/>
 <path d="M584.5,133.5 V149 L588.5,145.5 L591.5,151 L593.5,150 L590.5,144.5 H595 Z"/>
 <path d="M614.5,136 A8.3,8.3 0 1 0 620.8,133.5 M613,133.2 L614.5,136.5 L618,136.2"/>
 <path d="M647,149 Q644.5,145.5 645,142.5 L647.5,143.5 V135.5 Q647.5,134 649,134 Q650.5,134 650.5,135.5 V141 M650.5,134 Q650.5,132.5 652,132.5 Q653.5,132.5 653.5,134 V141 M653.5,134 Q653.5,133 655,133 Q656.5,133 656.5,134.5 V141 M656.5,135.5 Q656.5,134.5 658,134.5 Q659.5,134.5 659.5,136 V145 Q659.5,151 654,151 H650 Q648,151 647,149 Z"/>
 <rect x="775.5" y="133.5" width="10" height="17.5" rx="2"/>
 <path d="M781,137 H785.5 M782.5,140 H785.5 M781,143 H785.5 M782.5,146 H785.5"/>
 <path d="M803,135 V148 M820.5,135 V148 M806,141.5 H817.5 M808.5,139 L806,141.5 L808.5,144 M815,139 L817.5,141.5 L815,144"/>
</g>
<circle cx="487.7" cy="142.5" r="1.3" fill="#c0d8ec"/>
<circle cx="358.5" cy="142.5" r="0.9" fill="#b0c8dc"/>
<path d="M519.8,150.5 Q513.5,150 513.5,144 Q513.5,139.5 519.8,133 Q526,139.5 526,144 Q526,150 519.8,150.5 Z" fill="#b9d6ee"/>
<path d="M519.8,148.5 Q517.5,148 517.5,145.5 Q517.5,143.5 519.8,141 Q522,143.5 522,145.5 Q522,148 519.8,148.5 Z" fill="#fff"/>
<g fill="none" stroke="#3a7cc0" stroke-width="1.4">
 <circle cx="682.5" cy="140.5" r="6.8"/><path d="M687.4,145.4 L692.3,150.3"/>
 <circle cx="712.7" cy="140.5" r="6.8"/><path d="M717.6,145.4 L722.5,150.3 M712.7,137 V144 M709.2,140.5 H716.2"/>
 <circle cx="742.9" cy="140.5" r="6.8"/><path d="M747.8,145.4 L752.7,150.3 M739.4,140.5 H746.4"/>
</g>
<g fill="#c8c8cc"><rect x="469" y="128" width="1" height="28"/><rect x="570" y="128" width="1" height="28"/><rect x="761" y="128" width="1" height="28"/></g>
<!-- bottom panel header icons -->
<path d="M1861,757.5 L1866.5,762.5 L1872,757.5" fill="none" stroke="#fff" stroke-width="1.3"/>
<g fill="none" stroke="#fff" stroke-width="1.2" stroke-linejoin="round">
 <path d="M1896.5,753.5 L1902,758.5 L1898.2,761.1 L1895.8,764.9 L1891.3,760.3 L1894.8,757.9 Z"/>
 <path d="M1893.2,762.5 L1889.8,765.9"/>
</g>
<g fill="#444"><circle cx="1369" cy="864" r="1.3"/><circle cx="1369" cy="869" r="1.3"/><circle cx="1369" cy="874" r="1.3"/></g>
<!-- status dots -->
<circle cx="115" cy="1020.5" r="3" fill="#a0307a" opacity="0.6"/>
<circle cx="154" cy="1020.5" r="3.2" fill="#7040a0"/>
<circle cx="198" cy="1020.5" r="3.3" fill="#3a4ad0"/>
</svg>


</body></html>
